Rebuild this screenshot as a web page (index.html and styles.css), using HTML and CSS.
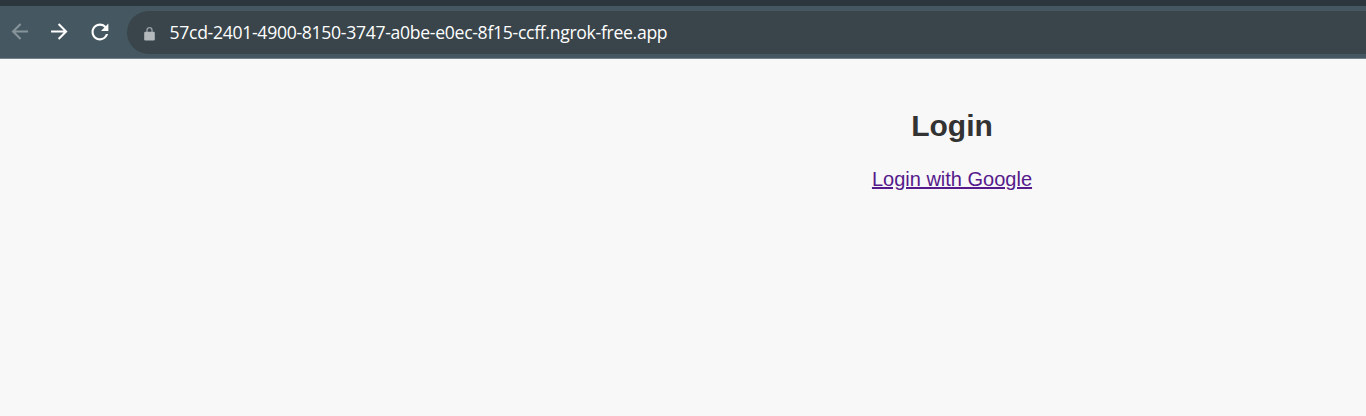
FILE: index.html
```html
<!DOCTYPE html>
<html lang="en">
<head>
<meta charset="utf-8">
<title>Login</title>
<link rel="stylesheet" href="styles.css">
</head>
<body>
<header class="browser">
  <div class="toolbar">
    <nav class="nav">
      <svg class="icon back" viewBox="1.5 2.8 19.4 19.4"><path d="M20 11H7.83l5.59-5.59L12 4l-8 8 8 8 1.41-1.41L7.83 13H20z"/></svg>
      <svg class="icon" viewBox="2 2.8 19.4 19.4"><path d="M12 4l-1.41 1.41L16.17 11H4v2h12.17l-5.58 5.59L12 20l8-8z"/></svg>
      <svg class="icon" viewBox="1.6 2.5 19 19"><path d="M17.65 6.35A7.958 7.958 0 0 0 12 4c-4.42 0-7.99 3.58-7.99 8s3.57 8 7.99 8c3.73 0 6.84-2.55 7.73-6h-2.08A5.99 5.99 0 0 1 12 18c-3.31 0-6-2.69-6-6s2.69-6 6-6c1.66 0 3.14.69 4.22 1.78L13 11h7V4z"/></svg>
    </nav>
    <div class="address">
      <svg class="lock" viewBox="0 0 12 16"><path class="shackle" d="M3 8V5.1a2.5 2.5 0 0 1 5 0V8"/><rect x=".2" y="6.8" width="10.6" height="8.6" rx="1.2"/></svg>
      <span class="url">57cd-2401-4900-8150-3747-a0be-e0ec-8f15-ccff.ngrok-free.app</span>
    </div>
  </div>
</header>
<main class="page">
  <h1 class="title">Login</h1>
  <a class="link" href="#">Login with Google</a>
</main>
</body>
</html>
```
FILE: styles.css
```css
body { margin: 0; height: 416px; overflow: hidden; background: #f8f8f8; font-family: "Liberation Sans", Arial, sans-serif; }
.browser { box-sizing: border-box; height: 59px; border-top: 6px solid #2c373d; background: #455861; border-bottom: 1px solid #72808a; }
.toolbar { display: flex; padding-top: 5px; }
.nav { display: flex; width: 118px; gap: 20px; padding: 11px 0 0 9px; box-sizing: content-box; }
.icon { flex: none; width: 20px; height: 20px; fill: #fff; }
.back { fill: #87939a; }
.address { flex: 1; display: flex; align-items: center; height: 43px; padding-left: 17px; border-radius: 22px 0 0 22px; background: #39454b; }
.lock { width: 12px; height: 16px; fill: #b4b9bc; }
.shackle { fill: none; stroke: #9ba2a6; stroke-width: 1.3; }
.url { margin: -1px 0 0 13.5px; font: 17.6px/24px "Open Sans", sans-serif; letter-spacing: -0.3px; color: #fff; white-space: nowrap; }
.page { display: flex; flex-direction: column; align-items: center; width: 828px; margin-left: 538px; padding-top: 49px; }
.title { margin: 0; font-size: 30px; line-height: 36px; color: #333; }
.link { margin-top: 24px; font-size: 20px; line-height: 23px; color: #551a8b; text-decoration-thickness: 2px; }
```
